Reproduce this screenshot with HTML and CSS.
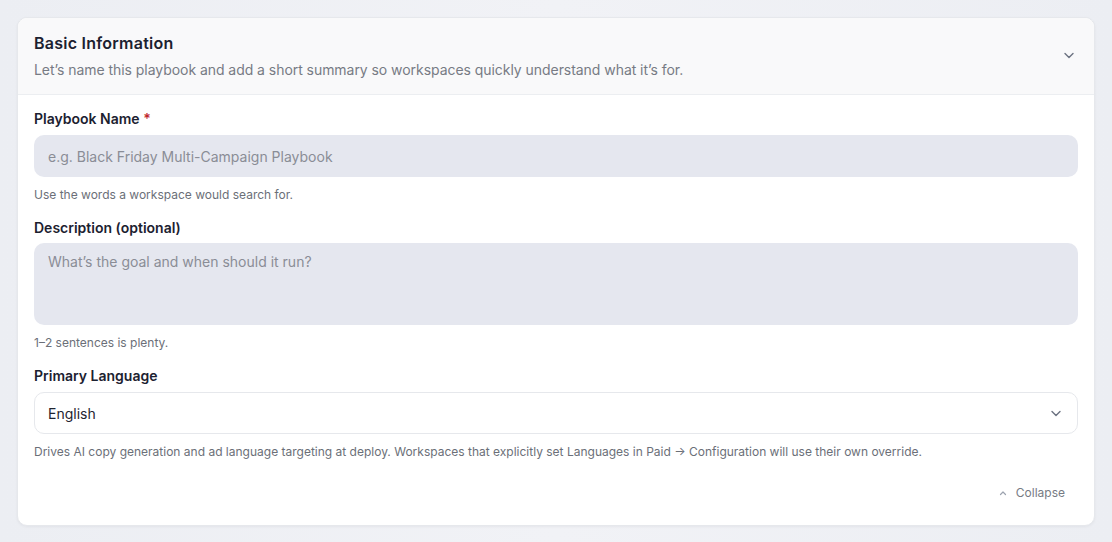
FILE: index.html
```html
<!DOCTYPE html>
<html lang="en">
<head>
<meta charset="utf-8">
<link rel="stylesheet" href="styles.css">
</head>
<body>
<div class="page">
  <section class="card">
    <header class="card-head">
      <div class="head-text">
        <h2 class="title">Basic Information</h2>
        <p class="subtitle">Let’s name this playbook and add a short summary so workspaces quickly understand what it’s for.</p>
      </div>
      <svg class="chev" width="14" height="14" viewBox="0 0 14 14"><path d="M3 5.5l4 4 4-4" fill="none" stroke="#6b7280" stroke-width="1.4" stroke-linecap="round" stroke-linejoin="round"/></svg>
    </header>
    <div class="card-body">
      <div class="field">
        <label class="label">Playbook Name <span class="req">*</span></label>
        <div class="input">e.g. Black Friday Multi-Campaign Playbook</div>
        <p class="hint">Use the words a workspace would search for.</p>
      </div>
      <div class="field">
        <label class="label">Description (optional)</label>
        <div class="input textarea">What’s the goal and when should it run?</div>
        <p class="hint">1–2 sentences is plenty.</p>
      </div>
      <div class="field">
        <label class="label">Primary Language</label>
        <div class="select">
          <span>English</span>
          <svg width="14" height="14" viewBox="0 0 14 14"><path d="M3 5.5l4 4 4-4" fill="none" stroke="#6b7280" stroke-width="1.4" stroke-linecap="round" stroke-linejoin="round"/></svg>
        </div>
        <p class="hint">Drives AI copy generation and ad language targeting at deploy. Workspaces that explicitly set Languages in Paid → Configuration will use their own override.</p>
      </div>
      <div class="footer">
        <button class="collapse">
          <svg width="10" height="10" viewBox="0 0 10 10"><path d="M2.5 6.5l2.5-2.5 2.5 2.5" fill="none" stroke="#9ca3af" stroke-width="1.2" stroke-linecap="round" stroke-linejoin="round"/></svg>
          Collapse
        </button>
      </div>
    </div>
  </section>
</div>
</body>
</html>
```
FILE: styles.css
```css
* { box-sizing: border-box; }
html, body { margin: 0; padding: 0; }
body {
  background: linear-gradient(90deg, #eceef3 0%, #f1f2f6 50%, #eceef3 100%);
  font-family: Inter, "Noto Sans", sans-serif;
  color: #1f2430;
  width: 1112px;
  height: 542px;
  overflow: hidden;
}
.page { padding: 17px 17px 0 17px; }
.card {
  background: #fff;
  border-radius: 10px;
  border: 1px solid #e6e8ec;
  box-shadow: 0 1px 3px rgba(20, 24, 40, 0.05);
  overflow: hidden;
  height: 509px;
}
.card-head {
  background: #f9f9fa;
  border-bottom: 1px solid #eceef1;
  display: flex;
  align-items: center;
  justify-content: space-between;
  padding: 13px 18px 13px 16px;
  height: 77px;
}
.title {
  margin: 0;
  font-size: 16px;
  font-weight: 600;
  color: #1c2130;
  letter-spacing: 0.25px;
  line-height: 20px;
}
.subtitle {
  margin: 8px 0 0;
  font-size: 14px;
  color: #777b84;
  line-height: 18px;
  letter-spacing: -0.05px;
}
.chev { margin-bottom: 3px; }
.card-body { padding: 15px 16px 0 16px; }
.field { display: flex; flex-direction: column; }
.label {
  font-size: 14px;
  font-weight: 600;
  color: #1c2130;
  line-height: 18px;
  letter-spacing: 0;
}
.req { color: #c0262d; }
.input {
  margin-top: 7px;
  background: #e5e7ef;
  border-radius: 10px;
  height: 42px;
  padding: 0 14px;
  display: flex;
  align-items: center;
  font-size: 14px;
  color: #8a8d96;
  letter-spacing: 0;
}
.textarea {
  margin-top: 6px;
  height: 82px;
  align-items: flex-start;
  padding-top: 10px;
}
.hint {
  margin: 10px 0 17px;
  font-size: 12px;
  color: #6b6f78;
  line-height: 15px;
  letter-spacing: 0;
}
.select {
  margin-top: 7px;
  background: #fff;
  border: 1px solid #e6e8ec;
  border-radius: 10px;
  height: 42px;
  padding: 0 14px 0 13px;
  display: flex;
  align-items: center;
  justify-content: space-between;
  font-size: 14px;
  color: #1f2430;
  letter-spacing: 0;
}
.footer { display: flex; justify-content: flex-end; padding-right: 13px; margin-top: 9px; }
.collapse {
  background: none;
  border: none;
  font-family: inherit;
  font-size: 12px;
  color: #777b84;
  display: flex;
  align-items: center;
  gap: 8px;
  padding: 0;
  letter-spacing: 0;
}
```
